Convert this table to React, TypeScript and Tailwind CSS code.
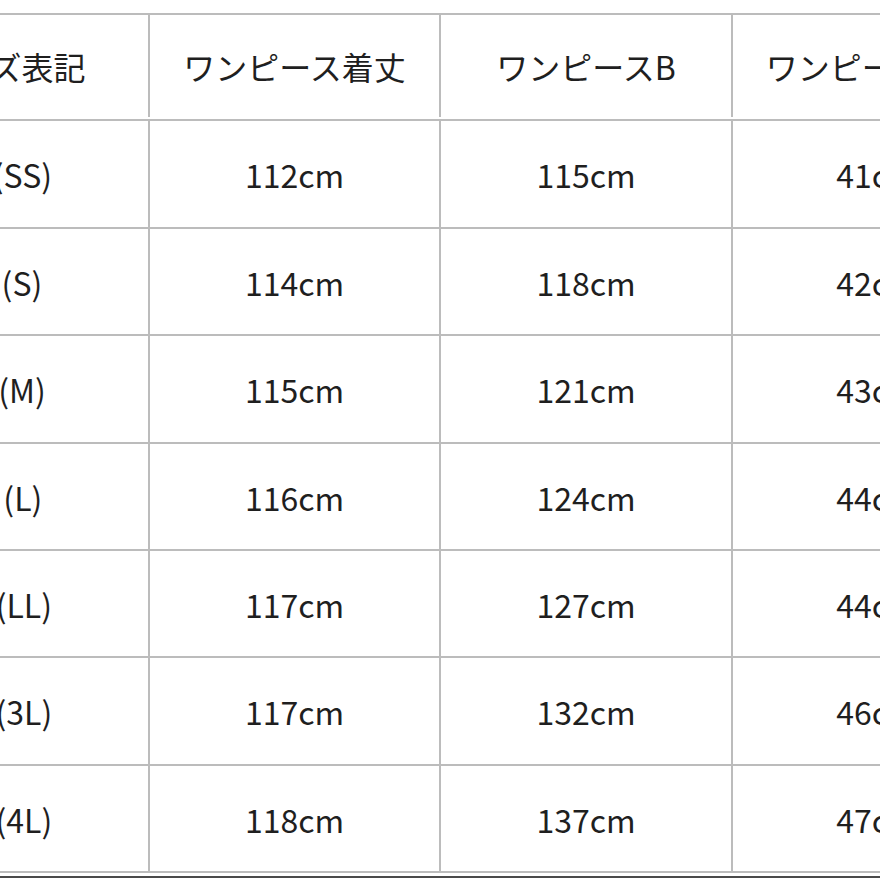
import React from "react";

type R = { label: string; pad: string; a: string; b: string; c: string };

const rows: R[] = [
  { label: "5号 (SS)", pad: "pr-[20px]", a: "112cm", b: "115cm", c: "41cm" },
  { label: "7号 (S)", pad: "pr-[21px]", a: "114cm", b: "118cm", c: "42cm" },
  { label: "9号 (M)", pad: "pr-[21px]", a: "115cm", b: "121cm", c: "43cm" },
  { label: "11号 (L)", pad: "pr-[37px]", a: "116cm", b: "124cm", c: "44cm" },
  { label: "13号 (LL)", pad: "pr-[35px]", a: "117cm", b: "127cm", c: "44cm" },
  { label: "15号 (3L)", pad: "pr-[35px]", a: "117cm", b: "132cm", c: "46cm" },
  { label: "17号 (4L)", pad: "pr-[35px]", a: "118cm", b: "137cm", c: "47cm" },
];

const heights = ["h-[108px]", "h-[107px]", "h-[108px]", "h-[107px]", "h-[107px]", "h-[108px]", "h-[107px]"];

function Row({ cells, h, pad }: { cells: string[]; h: string; pad: string }) {
  return (
    <div className={`flex border-t-2 border-[#bcbcbc] ${h}`}>
      <div className={`w-[290px] shrink-0 border-r-2 border-[#bcbcbc] flex items-center justify-center whitespace-pre ${pad}`}>
        {cells[0]}
      </div>
      <div className="w-[291px] shrink-0 border-r-2 border-[#bcbcbc] flex items-center justify-center whitespace-nowrap">
        {cells[1]}
      </div>
      <div className="w-[292px] shrink-0 border-r-2 border-[#bcbcbc] flex items-center justify-center whitespace-nowrap">
        {cells[2]}
      </div>
      <div className="w-[288px] shrink-0 flex items-center justify-center whitespace-nowrap">{cells[3]}</div>
    </div>
  );
}

export default function App() {
  return (
    <div
      className="w-[880px] h-[880px] overflow-hidden bg-white text-[#1f1f1f] text-[32px] leading-none"
      style={{ fontFamily: '"Noto Sans CJK JP", "Noto Sans", sans-serif' }}
    >
      <div className="pt-[13px] ml-[-140px] w-[1161px]">
        <Row cells={["サイズ表記", "ワンピース着丈", "ワンピースB", "ワンピース肩幅"]} h="h-[106px] pb-[2px]" pad="pl-[4px]" />
        {rows.map((r, i) => (
          <Row key={i} cells={[r.label, r.a, r.b, r.c]} h={heights[i]} pad={r.pad} />
        ))}
        <div className="border-t-2 border-[#bcbcbc] h-[5px]" />
        <div className="border-t-2 border-[#4a4a4a] h-[10px]" />
      </div>
    </div>
  );
}
